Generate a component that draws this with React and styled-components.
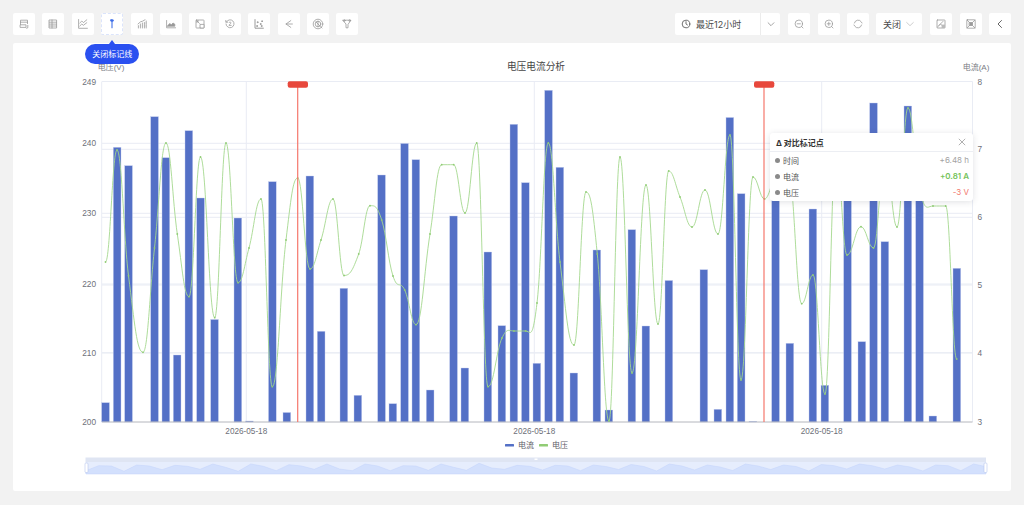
import React from 'react'
import styled, { createGlobalStyle } from 'styled-components'

const FONT = `Inter, "Noto Sans CJK SC", sans-serif`
const AXIS_FONT = `"Liberation Sans", "Noto Sans CJK SC", sans-serif`

const GlobalStyle = createGlobalStyle`
  html, body {
    margin: 0;
    padding: 0;
    background: #f2f2f2;
    font-family: ${FONT};
  }
  * { box-sizing: border-box; }
`

const Page = styled.div`
  width: 1024px;
  height: 505px;
  padding: 13px 13px 14px;
  overflow: hidden;
`

const Toolbar = styled.div`
  display: flex;
  justify-content: space-between;
  height: 22px;
  margin-bottom: 8px;
`

const ToolGroup = styled.div`
  display: flex;
  align-items: center;
  gap: ${(p) => p.$gap || '7.4px'};
`

const ToolButton = styled.div`
  position: relative;
  display: flex;
  align-items: center;
  justify-content: center;
  width: 22px;
  height: 22px;
  background: #fff;
  border-radius: 2px;
  color: #9a9a9a;
  border: ${(p) => (p.$active ? '1px dashed #dbe4fb' : 'none')};
  svg { display: block; }
`

const Hint = styled.div`
  position: absolute;
  z-index: 3;
  top: 30px;
  left: 50%;
  transform: translateX(-50%);
  width: 54px;
  height: 20px;
  border-radius: 10px;
  background: #2a50f0;
  color: #fff;
  font-size: 8px;
  line-height: 20px;
  text-align: center;
  white-space: nowrap;
  &::before {
    content: '';
    position: absolute;
    top: -4px;
    left: 50%;
    margin-left: -3px;
    border-left: 3px solid transparent;
    border-right: 3px solid transparent;
    border-bottom: 4px solid #2a50f0;
  }
`

const RangeSelect = styled.div`
  display: flex;
  width: 105px;
  height: 22px;
  background: #fff;
  border-radius: 2px;
  color: #4a4a4a;
  font-size: 9px;
  margin-right: 0.5px;
`

const RangeLabel = styled.div`
  display: flex;
  align-items: center;
  gap: 5px;
  width: 86px;
  padding-left: 6px;
  border-right: 1px solid #ececec;
`

const RangeArrow = styled.div`
  flex: 1;
  display: flex;
  align-items: center;
  justify-content: center;
  color: #777;
`

const CloseSelect = styled.div`
  display: flex;
  align-items: center;
  justify-content: space-between;
  width: 46px;
  height: 22px;
  margin: 0 0.6px 0 -0.6px;
  padding: 0 7px;
  background: #fff;
  border-radius: 2px;
  color: #4a4a4a;
  font-size: 9px;
`

const Card = styled.div`
  position: relative;
  height: 448px;
  background: #fff;
  border-radius: 2px;
`

const ChartSvg = styled.svg`
  display: block;
  width: 998px;
  height: 448px;
  font-family: ${AXIS_FONT};
`

const ComparePanel = styled.div`
  position: absolute;
  z-index: 2;
  left: 757px;
  top: 90px;
  width: 203px;
  height: 68px;
  background: #fff;
  border-radius: 3px;
  box-shadow: 0 1px 6px rgba(60, 70, 90, 0.16);
  font-size: 8px;
  color: #555;
`

const PanelHead = styled.div`
  display: flex;
  align-items: center;
  justify-content: space-between;
  height: 19px;
  padding: 0 6px 0 6px;
  border-bottom: 1px solid #eceef3;
  font-weight: 700;
  color: #333;
  svg { color: #888; }
`

const PanelRow = styled.div`
  display: flex;
  align-items: center;
  height: 16.2px;
  padding: 0 4px 0 5px;
`

const Dot = styled.span`
  width: 5px;
  height: 5px;
  margin-right: 3px;
  border-radius: 50%;
  background: #8a8a8a;
`

const RowValue = styled.span`
  margin-left: auto;
  color: ${(p) => p.$color};
  font-weight: ${(p) => (p.$bold ? 600 : 400)};
`

const Icon = ({ size = 12, color, children }) => (
  <svg width={size} height={size} viewBox="0 0 12 12" fill="none" stroke={color || 'currentColor'} strokeWidth="0.8" strokeLinecap="round" strokeLinejoin="round">
    {children}
  </svg>
)

const leftIcons = [
  <><path d="M2.500 6.500V2.200h7v3.500" /><path d="M2.500 4.200h7" /><rect x="2.500" y="6.800" width="5.500" height="2.600" /><path d="M9.800 7.400v2.400l-1.200.4" /></>,
  <><rect x="2.400" y="2" width="7.200" height="8" /><path d="M2.400 4.200h7.200M2.400 6.100h7.200M2.400 8h7.200M5 2v8" /></>,
  <><path d="M1.600 1.500v8.800h8.800" /><path d="M2.800 5l2-2 1.600 1.600 3.400-2.800M2.800 8l2-2 1.600 1.300 3.400-2.600" /></>,
  null,
  <><path d="M2.400 10V7.600M4.400 10V6M6.400 10V5M8.400 10V4M10.200 10V3" strokeDasharray="1 .5" /><path d="M2 6l2.500-2.200 2-.6L9 1.800" /></>,
  <><path d="M1.600 2.500v7.300h9" /><path d="M2.600 8l2-2.400 1.800 1.200L8 5l1.800 1.200v2H2.600z" fill="currentColor" /></>,
  <><rect x="2" y="2" width="8" height="8" rx=".6" /><rect x="6.400" y="6.400" width="3.600" height="3.600" fill="#fff" /><path d="M3 3l2.400 2.400M3 3h1.600M3 3v1.600" /></>,
  <><path d="M2.400 4a4 4 0 1 1-.4 2" /><path d="M1.800 2.400V4.200h1.800" /><path d="M5 4.600c.4-.8 2-.7 2 .3 0 .9-2 1.500-2 2.500h2.200" /></>,
  <><path d="M2 1.600v8.600h8.400" strokeWidth="1" /><circle cx="4" cy="8" r=".5" fill="currentColor" /><circle cx="4.600" cy="4.200" r=".5" fill="currentColor" /><circle cx="7.600" cy="6" r=".5" fill="currentColor" /><circle cx="9" cy="3.200" r=".5" fill="currentColor" /><circle cx="8.600" cy="8" r=".5" fill="currentColor" /></>,
  <><path d="M7.800 2.600L3 6l4.800 3.400" /><path d="M3 6h6.400" /></>,
  <><circle cx="6" cy="6" r="4.800" /><circle cx="6" cy="6" r="2.800" /><path d="M6 3.200v5.600M4 4l4 4M8.800 8.800l1.200 1.200" /></>,
  <><path d="M2 2.200h8L7 6.400v3.400H5V6.400z" /><circle cx="3.400" cy="2.600" r=".8" /><circle cx="8.600" cy="2.600" r=".8" /></>,
]

// [left edge, top] of each current bar, in page pixels
const BARS = [
  [101.7, 402.7], [113.3, 147.3], [124.7, 165.7], [150.7, 116.7], [162, 157.7], [173.3, 355],
  [185, 130.7], [196.7, 198], [210.7, 319.5], [234, 218], [245.5, 421], [268.5, 181.7],
  [283, 412.5], [306, 176], [317.3, 331.3], [340, 288.3], [354, 395.3], [377.7, 175],
  [389, 403.7], [400.7, 143.5], [412, 159.7], [426.3, 390], [449.7, 216], [461, 368],
  [484, 252], [498, 325.7], [510, 124.3], [521.5, 182.7], [533, 363.3], [544.7, 90.3],
  [556, 167.3], [570, 373], [593, 250], [605, 410], [628, 229.7], [642, 326],
  [665, 280.5], [700, 269.7], [714, 409.3], [726, 117.5], [737.3, 193.7], [749, 421.4],
  [771.7, 190], [786, 343.3], [809, 209], [821, 385.3], [843.7, 190], [858, 341.7],
  [869.7, 103], [881, 241.7], [904, 106], [915.7, 190], [929, 416], [953, 268.3],
]

// voltage line points, drawn as a smooth curve
const LINE = [
  [105.5, 262], [117, 150], [128.5, 275.7], [143, 352.3], [154.5, 248], [166, 143], [177.3, 234],
  [189, 296.7], [200.5, 157], [214.7, 317.7], [226, 143], [238, 282.7], [249, 248], [261, 199],
  [272.3, 386.7], [286, 240], [297.7, 178], [310, 269], [321, 240], [333, 199], [344, 275.5],
  [358.7, 254], [370, 205.7], [381.7, 220], [393, 276], [404.7, 290], [416, 324.7], [430, 234],
  [441.7, 164.7], [453.7, 164.7], [465, 213], [476.7, 143], [488, 386.7], [502, 338], [514, 331],
  [525.7, 331], [537, 303], [548.3, 143], [560, 262], [574, 345], [586, 192], [597.3, 254],
  [609, 421], [620, 157], [632, 373], [646, 185], [658, 324], [668.7, 171], [680, 197], [692, 227],
  [705, 190], [718, 234], [730, 135], [741, 380], [753, 177], [764.5, 199], [778, 172], [790, 175],
  [801.7, 303.7], [813, 275], [825, 394], [836, 150], [847, 255], [861, 226.7], [873.5, 248],
  [885, 155], [897, 227], [908, 108], [920, 192], [933, 206], [945.7, 206], [956.7, 359],
]

// dataZoom preview, one y every 12.68px from x=86
const WAVE = [
  470.7, 465.7, 466, 471.3, 465, 466, 469.7, 465.3, 466.3, 469.3, 464, 467.3, 471.3, 464, 466.3, 470.7,
  464.7, 466, 469.3, 464, 469, 470.7, 464, 466, 470.7, 465.7, 466, 470.3, 464, 467.3, 470.3, 463.3,
  468, 469.3, 465.3, 466.3, 470, 465.3, 466, 470.7, 465, 466.5, 469.5, 464.5, 466.5, 471, 464, 466,
  470, 465, 467, 470.5, 464, 466, 469.5, 465, 466.5, 471, 464.5, 465.7, 469, 464, 465.7, 469, 465,
  467, 471, 465, 465.7, 470.7, 464, 466.7,
]

// flat tangent at every local peak or dip so the curve turns right on the point
const tangent = (p0, p1, p2) => {
  if ((p1[1] - p0[1]) * (p2[1] - p1[1]) <= 0) return 0
  return (p2[1] - p0[1]) / (p2[0] - p0[0])
}

const smoothPath = (pts) => {
  let d = `M${pts[0][0]} ${pts[0][1]}`
  for (let i = 0; i < pts.length - 1; i++) {
    const p1 = pts[i]
    const p2 = pts[i + 1]
    const m1 = tangent(pts[i - 1] || p1, p1, p2)
    const m2 = tangent(p1, p2, pts[i + 2] || p2)
    const dx = (p2[0] - p1[0]) * 0.42
    d += `C${(p1[0] + dx).toFixed(1)} ${(p1[1] + m1 * dx).toFixed(1)} ${(p2[0] - dx).toFixed(1)} ${(p2[1] - m2 * dx).toFixed(1)} ${p2[0]} ${p2[1]}`
  }
  return d
}

const GRID = '#e9ecf4'
const LEFT_TICKS = [[249, 81.5], [240, 143.3], [230, 213.3], [220, 284], [210, 352.7], [200, 421.5]]
const RIGHT_TICKS = [[8, 81.5], [7, 149.3], [6, 217.3], [5, 285], [4, 353], [3, 421.5]]
const DATES = [246.3, 534.3, 821.7]
const MARKS = [297.7, 764]

const Chart = () => {
  const wavePts = WAVE.map((y, i) => `${(86 + i * 12.68).toFixed(1)},${y}`)
  return (
    <ChartSvg viewBox="13 43 998 448">
      <text x="536" y="69.500" textAnchor="middle" fontSize="9.700" fill="#464646">电压电流分析</text>
      <text x="111" y="70" textAnchor="middle" fontSize="8" fill="#7a7c85">电压(V)</text>
      <text x="976" y="70" textAnchor="middle" fontSize="8" fill="#7a7c85">电流(A)</text>

      {LEFT_TICKS.slice(0, 5).map(([, y]) => (
        <line key={y} x1="102" x2="972.500" y1={y} y2={y} stroke={GRID} strokeWidth="1" />
      ))}
      {RIGHT_TICKS.slice(1, 5).map(([, y]) => (
        <line key={y} x1="102" x2="972.500" y1={y} y2={y} stroke={GRID} strokeWidth="1" />
      ))}
      {[101.7, ...DATES, 972.500].map((x) => (
        <line key={x} x1={x} x2={x} y1="81.500" y2="422" stroke={GRID} strokeWidth="1" />
      ))}

      {LEFT_TICKS.map(([v, y]) => (
        <text key={v} x="96" y={y + 3} textAnchor="end" fontSize="8.300" fill="#6e7079">{v}</text>
      ))}
      {RIGHT_TICKS.map(([v, y]) => (
        <text key={v} x="977.500" y={y + 3} fontSize="8.300" fill="#6e7079">{v}</text>
      ))}
      {DATES.map((x) => (
        <text key={x} x={x} y="433.500" textAnchor="middle" fontSize="8.200" fill="#6e7079">2026-05-18</text>
      ))}

      {BARS.map(([x, top]) => (
        <rect key={x} x={x} y={top} width="7.700" height={422 - top} fill="#5470c6" stroke="#c3cdee" strokeWidth="0.400" />
      ))}
      <line x1="102" x2="972.500" y1="422" y2="422" stroke="#b4b6bd" strokeWidth="1" />

      <path d={smoothPath(LINE)} fill="none" stroke="#a5d88e" strokeWidth="0.900" />
      {LINE.map(([x, y]) => (
        <circle key={x} cx={x} cy={y} r="0.900" fill="#91cc75" />
      ))}

      {MARKS.map((x) => (
        <g key={x}>
          <line x1={x} x2={x} y1="84" y2="422" stroke="#f5776c" strokeWidth="1.200" />
          <rect x={x - 10} y="81.300" width="20.300" height="6.500" rx="2" fill="#e8483c" />
        </g>
      ))}

      <rect x="505" y="444" width="9" height="2.500" rx="0.500" fill="#5470c6" />
      <text x="518" y="448" fontSize="8" fill="#5f6068">电流</text>
      <rect x="539" y="444" width="9" height="2.500" rx="0.500" fill="#91cc75" />
      <text x="552" y="448" fontSize="8" fill="#5f6068">电压</text>

      <rect x="85.500" y="457.500" width="900.500" height="4.500" fill="#dfe5f3" />
      <rect x="85.500" y="462" width="900.500" height="12" fill="#e6edfd" />
      <polygon points={`86,474 ${wavePts.join(' ')} 986,474`} fill="#d3e0fd" stroke="#c2d3fb" strokeWidth="0.500" />
      <rect x="534.500" y="458.500" width="3" height="1.500" fill="#fff" />
      <rect x="85" y="463" width="3" height="9.500" rx="1" fill="#fff" stroke="#b9c8ef" strokeWidth="0.600" />
      <rect x="984" y="463" width="3" height="9.500" rx="1" fill="#fff" stroke="#b9c8ef" strokeWidth="0.600" />
    </ChartSvg>
  )
}

const App = () => (
  <Page>
    <GlobalStyle />
    <Toolbar>
      <ToolGroup>
        {leftIcons.map((icon, i) =>
          i === 3 ? (
            <ToolButton key={i} $active>
              <Icon color="#3f6fe8">
                <path d="M6 2.400v7.400" strokeWidth="1.100" />
                <rect x="4.600" y="1.800" width="2.800" height="1.400" rx=".4" fill="#3f6fe8" />
              </Icon>
              <Hint>关闭标记线</Hint>
            </ToolButton>
          ) : (
            <ToolButton key={i}><Icon>{icon}</Icon></ToolButton>
          )
        )}
      </ToolGroup>
      <ToolGroup $gap="7.500px">
        <RangeSelect>
          <RangeLabel>
            <Icon size={10} color="#555"><circle cx="6" cy="6" r="4.600" strokeWidth="1" /><path d="M6 3.200V6l1.800 1.200" strokeWidth="1" /></Icon>
            最近12小时
          </RangeLabel>
          <RangeArrow><Icon size={10}><path d="M2.500 4.500L6 8l3.500-3.500" /></Icon></RangeArrow>
        </RangeSelect>
        <ToolButton>
          <Icon><circle cx="5.800" cy="5.800" r="3.700" /><path d="M4.200 5.800h3.200M8.500 8.500L10 10" /></Icon>
        </ToolButton>
        <ToolButton>
          <Icon><circle cx="5.800" cy="5.800" r="3.700" /><path d="M4.200 5.800h3.200M5.800 4.200v3.200M8.500 8.500L10 10" /></Icon>
        </ToolButton>
        <ToolButton>
          <Icon><path d="M2.400 5a3.800 3.800 0 0 1 6.800-1.200L10 5M9.600 7a3.800 3.800 0 0 1-6.800 1.200L2 7" /></Icon>
        </ToolButton>
        <CloseSelect>
          关闭
          <Icon size={10} color="#b5b5b5"><path d="M2 4.200L6 8l4-3.800" /></Icon>
        </CloseSelect>
        <ToolButton>
          <Icon><rect x="2" y="2" width="8" height="8" rx=".5" /><path d="M2.500 9l3-3 1.500 1.500M8 3.400L4 7.400" /><rect x="6.600" y="6.600" width="3.400" height="3.400" fill="#bbb" stroke="none" /></Icon>
        </ToolButton>
        <ToolButton>
          <Icon><rect x="1.800" y="1.800" width="8.400" height="8.400" rx=".6" /><path d="M4.500 4.500h3v3h-3z" fill="currentColor" /><path d="M2 2l2.500 2.500M10 2L7.500 4.500M2 10l2.500-2.500M10 10L7.500 7.500" /></Icon>
        </ToolButton>
        <ToolButton>
          <Icon color="#666"><path d="M7.500 2.500L4 6l3.500 3.500" strokeWidth="1" /></Icon>
        </ToolButton>
      </ToolGroup>
    </Toolbar>
    <Card>
      <Chart />
      <ComparePanel>
        <PanelHead>
          Δ 对比标记点
          <Icon size={10}><path d="M2.500 2.500l7 7M9.500 2.500l-7 7" /></Icon>
        </PanelHead>
        <PanelRow><Dot />时间<RowValue $color="#a3a3a3">+6.48 h</RowValue></PanelRow>
        <PanelRow><Dot />电流<RowValue $color="#74c35a" $bold>+0.81 A</RowValue></PanelRow>
        <PanelRow><Dot />电压<RowValue $color="#f2786d">-3 V</RowValue></PanelRow>
      </ComparePanel>
    </Card>
  </Page>
)

export default App
